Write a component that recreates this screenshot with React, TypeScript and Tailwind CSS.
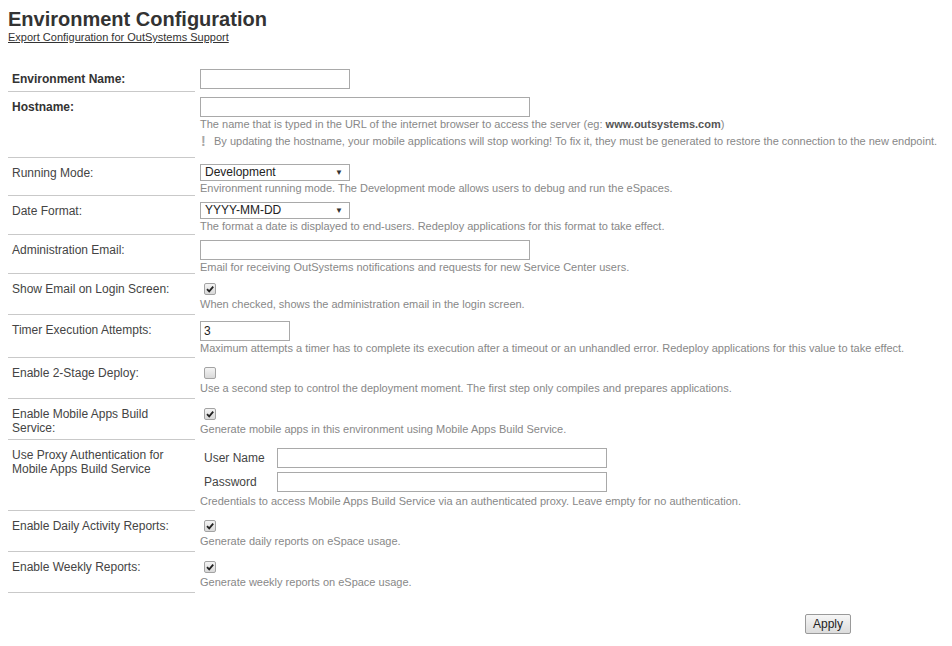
import React from 'react';

const Check = ({ checked }: { checked?: boolean }) => (
  <span className="block w-[12px] h-[12px] border border-[#a3a3a3] rounded-[2px] bg-gradient-to-b from-[#f4f4f4] to-[#d9d9d9]">
    {checked && (
      <svg viewBox="0 0 10 10" className="w-[10px] h-[10px]">
        <path d="M2 5.2 L4.2 7.4 L8.2 2.6" fill="none" stroke="#222" strokeWidth="1.8" />
      </svg>
    )}
  </span>
);

const TextBox = ({ w, value }: { w: string; value?: string }) => (
  <div className={`${w} h-[20px] border border-[#a9a9a9] bg-white px-[3px] text-[12px] leading-[18px] text-[#222]`}>
    {value}
  </div>
);

const Select = ({ value }: { value: string }) => (
  <div className="w-[150px] h-[17px] border border-[#a9a9a9] bg-white flex items-center justify-between pl-[4px] pr-[6px] text-[12px] leading-[15px] text-[#222]">
    <span>{value}</span>
    <span className="text-[8px] text-[#333]">▼</span>
  </div>
);

const Desc = ({ children }: { children: React.ReactNode }) => (
  <div className="text-[11px] leading-[14px] text-[#888]">{children}</div>
);

const Row = ({
  label,
  bold,
  children,
  className,
}: {
  label: React.ReactNode;
  bold?: boolean;
  children: React.ReactNode;
  className: string;
}) => (
  <div className="flex">
    <div
      className={`w-[187px] shrink-0 border-b border-[#c9c9c9] pt-[8px] pl-[4px] pr-[10px] text-[12px] leading-[14px] ${
        bold ? 'font-bold text-[#333]' : 'text-[#444]'
      }`}
    >
      {label}
    </div>
    <div className={`ml-[5px] ${className}`}>{children}</div>
  </div>
);

const CheckRow = ({ label, checked, desc }: { label: React.ReactNode; checked?: boolean; desc: string }) => (
  <Row label={label} className="pt-[9px] pb-[4px]">
    <div className="pl-[4px]">
      <Check checked={checked} />
    </div>
    <div className="mt-[2px]">
      <Desc>{desc}</Desc>
    </div>
  </Row>
);

export default function App() {
  return (
    <div className="min-h-[646px] bg-white px-[8px] pt-[7px] font-['Liberation_Sans',Arial,sans-serif]">
      <h1 className="text-[20px] leading-[24px] font-bold text-[#333]">Environment Configuration</h1>
      <a className="block text-[11px] leading-[13px] text-[#333] underline">
        Export Configuration for OutSystems Support
      </a>

      <div className="mt-[20px]">
        <Row label="Environment Name:" bold className="pt-[5px] pb-[3px]">
          <TextBox w="w-[150px]" />
        </Row>

        <Row label="Hostname:" bold className="pt-[5px] pb-[10px]">
          <TextBox w="w-[330px]" />
          <Desc>
            The name that is typed in the URL of the internet browser to access the server (eg:{' '}
            <b className="text-[#555]">www.outsystems.com</b>)
          </Desc>
          <div className="mt-[3px] flex items-center text-[11px] leading-[14px] text-[#888]">
            <span className="w-[14px] pl-[1px] font-black text-[14px] leading-[14px] text-[#a8a8a8]">!</span>
            <span>
              By updating the hostname, your mobile applications will stop working! To fix it, they must be generated to
              restore the connection to the new endpoint.
            </span>
          </div>
        </Row>

        <Row label="Running Mode:" className="pt-[6px] pb-[1px]">
          <Select value="Development" />
          <Desc>Environment running mode. The Development mode allows users to debug and run the eSpaces.</Desc>
        </Row>

        <Row label="Date Format:" className="pt-[6px] pb-[2px]">
          <Select value="YYYY-MM-DD" />
          <Desc>The format a date is displayed to end-users. Redeploy applications for this format to take effect.</Desc>
        </Row>

        <Row label="Administration Email:" className="pt-[5px]">
          <TextBox w="w-[330px]" />
          <Desc>Email for receiving OutSystems notifications and requests for new Service Center users.</Desc>
        </Row>

        <CheckRow
          label="Show Email on Login Screen:"
          checked
          desc="When checked, shows the administration email in the login screen."
        />

        <Row label="Timer Execution Attempts:" className="pt-[6px] pb-[3px]">
          <TextBox w="w-[90px]" value="3" />
          <Desc>
            Maximum attempts a timer has to complete its execution after a timeout or an unhandled error. Redeploy
            applications for this value to take effect.
          </Desc>
        </Row>

        <CheckRow
          label="Enable 2-Stage Deploy:"
          desc="Use a second step to control the deployment moment. The first step only compiles and prepares applications."
        />

        <CheckRow
          label="Enable Mobile Apps Build Service:"
          checked
          desc="Generate mobile apps in this environment using Mobile Apps Build Service."
        />

        <Row label="Use Proxy Authentication for Mobile Apps Build Service" className="pt-[8px] pb-[3px]">
          <div className="flex flex-col gap-[4px]">
            <div className="flex items-center">
              <span className="w-[77px] pl-[4px] text-[12px] text-[#444]">User Name</span>
              <TextBox w="w-[330px]" />
            </div>
            <div className="flex items-center">
              <span className="w-[77px] pl-[4px] text-[12px] text-[#444]">Password</span>
              <TextBox w="w-[330px]" />
            </div>
          </div>
          <div className="mt-[2px]">
            <Desc>
              Credentials to access Mobile Apps Build Service via an authenticated proxy. Leave empty for no
              authentication.
            </Desc>
          </div>
        </Row>

        <CheckRow label="Enable Daily Activity Reports:" checked desc="Generate daily reports on eSpace usage." />
        <CheckRow label="Enable Weekly Reports:" checked desc="Generate weekly reports on eSpace usage." />
      </div>

      <div className="w-[843px] mt-[21px] flex justify-end">
        <button className="h-[20px] px-[7px] border border-[#9a9a9a] rounded-[2px] bg-gradient-to-b from-[#f6f6f6] to-[#dcdcdc] text-[12px] leading-[18px] text-[#222]">
          Apply
        </button>
      </div>
    </div>
  );
}
